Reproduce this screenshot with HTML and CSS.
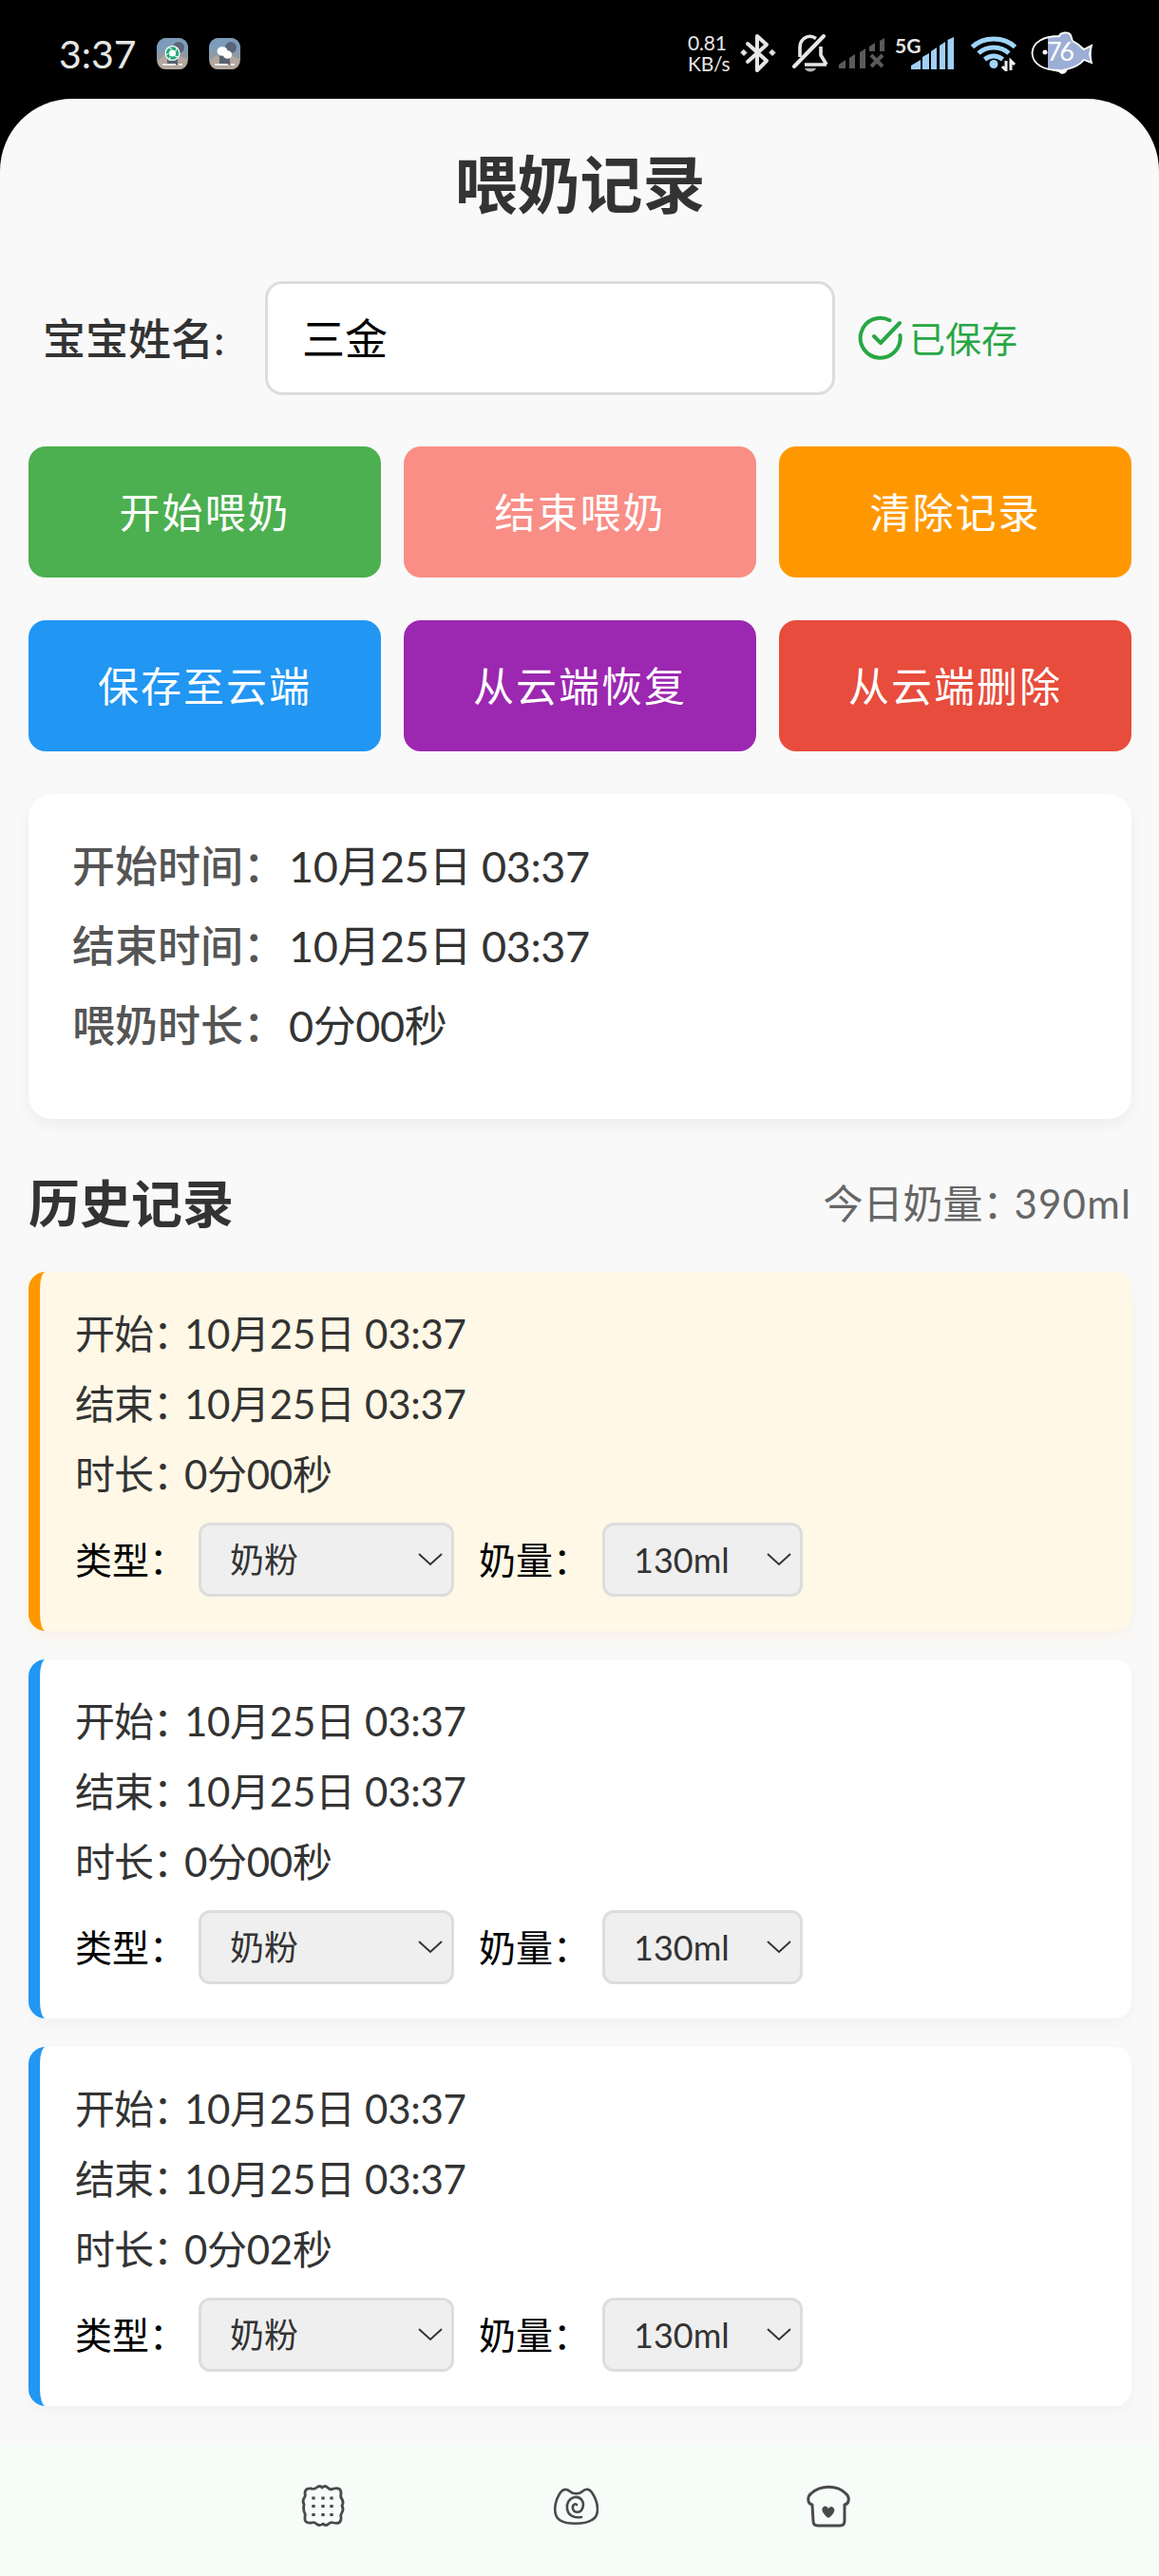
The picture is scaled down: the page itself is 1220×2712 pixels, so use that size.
FILE: index.html
```
<!DOCTYPE html>
<html lang="zh-CN">
<head>
  <meta charset="UTF-8" />
  <meta name="viewport" content="width=device-width, initial-scale=1.0" />
  <title>喂奶记录</title>
  <link rel="stylesheet" href="styles.css">
</head>
<body>
  <header class="status-bar">
    <span class="clock">3:37</span>
    <svg class="app-icon" viewBox="0 0 33 33">
      <rect width="33" height="33" rx="10" fill="#8d9aa6" />
      <path d="M0 14h33v-4a10 10 0 0 0-10-10h-13a10 10 0 0 0-10 10z" fill="#7d9cba" />
      <path d="M1 24l7-6 6 5 5-6 13 5v3a8 8 0 0 1-8 8H9a8 8 0 0 1-8-8z" fill="#b3a79f" />
      <circle cx="23" cy="10" r="6" fill="#5c6577" />
      <path d="M11 17h11v11H11z" fill="#59616f" />
      <path d="M6 28h14M23 28h4" stroke="#e9e9e9" stroke-width="2" />
      <circle cx="16.500" cy="16" r="8" fill="#fff" />
      <circle cx="16.500" cy="16" r="5.200" fill="none" stroke="#23a87a" stroke-width="3.200" />
      <path d="M16 12l-4-2M20 14l1-4M19 19l4 1M14 20l-1 4M12.500 16l-3 2" stroke="#fff" stroke-width="1" />
    </svg>
    <svg class="app-icon" viewBox="0 0 33 33">
      <rect width="33" height="33" rx="10" fill="#8d9aa6" />
      <path d="M0 14h33v-4a10 10 0 0 0-10-10h-13a10 10 0 0 0-10 10z" fill="#7d9cba" />
      <path d="M1 24l7-6 6 5 5-6 13 5v3a8 8 0 0 1-8 8H9a8 8 0 0 1-8-8z" fill="#b3a79f" />
      <circle cx="23" cy="10" r="6" fill="#5c6577" />
      <path d="M11 17h11v11H11z" fill="#59616f" />
      <path d="M6 28h14M23 28h4" stroke="#e9e9e9" stroke-width="2" />
      <ellipse cx="14" cy="14" rx="5.500" ry="4.800" fill="#fff" />
      <ellipse cx="19.500" cy="17.500" rx="4.700" ry="4.300" fill="#fff" />
    </svg>

    <div class="status-right">
      <div class="net-speed"><span>0.81</span><span>KB/s</span></div>
      <svg class="bluetooth" viewBox="0 0 38 42" fill="none" stroke="#e6e6e6" stroke-width="4" stroke-linejoin="round" stroke-linecap="round">
        <path d="M8 11l20 18-10 10V3l10 9L8 30" />
        <path d="M4 17.500l3 3-3 3-3-3zM34 17.500l3 3-3 3-3-3z" fill="#e6e6e6" stroke-width="1" />
      </svg>
      <svg class="mute" viewBox="0 0 38 42" fill="none" stroke="#e6e6e6" stroke-width="3.600">
        <path d="M25 5.500C17 0 8 6 8 15v10M13 33h23M30 14v9l6 10" />
        <path d="M2 35L33 3" stroke-width="4" stroke-linecap="round" />
        <path d="M13 37h12c-2 4.500-10 4.500-12 0z" fill="#b5b5b5" stroke="none" />
      </svg>
      <svg class="signal-off" viewBox="0 0 48 32" fill="#5a5a5a">
        <path d="M0 28l7-5v9H0zM11 21l6-4v15h-6zM22 15l6-4v21h-6zM32 9l6-4v9h-6zM43 3l5-3v14h-5z" />
        <path d="M34 18l12 12M46 18L34 30" stroke="#5a5a5a" stroke-width="4" />
      </svg>
      <div class="mobile-net">
        <span>5G</span>
        <svg viewBox="0 0 46 34">
          <path d="M0 30l10-6v10H0zM12 21l7-4v17h-7zM21 15l6-4v23h-6zM30 9l6-4v29h-6zM38.500 3L45 0v34h-6.500z" fill="#9fd0f8" />
        </svg>
      </div>
      <svg class="wifi" viewBox="0 0 48 38" fill="none" stroke="#9fd5fa" stroke-width="5">
        <path d="M1.500 12.500C13 1 35 1 46.500 12.500M8 19c9-8 23-8 32 0M14.500 25.500c6-4.500 13-4.500 19 0" />
        <circle cx="24" cy="30.500" r="4.500" fill="#9fd5fa" stroke="none" />
        <path d="M37 27v10l-4-4M42 37V27l4 4" stroke="#f2f2f2" stroke-width="3" />
      </svg>
      <div class="battery">
        <svg viewBox="0 0 66 46">
          <path d="M18 6l12-1c1-4 10-5 12-1l2 6c4 2 9 6 12 9l8-4v18l-8-3c-5 6-16 11-26 11l-12-2z" fill="#9daed6" />
          <path d="M18 39q9 3 20 0l-2 3c-2 3-5 3-6 1-5-1-9-2-12-4z" fill="#fff" />
          <path d="M1.500 23C2 11 14 5 30 5c1-4 10-5 12-1 1 2 1 4 2 6 4 2 9 6 12 9l8-4-2 9 2 9-8-3c-4 5-10 8-18 10-2 5-6 5-8 1C14 41 2 35 1.500 23z" fill="none" stroke="#fff" stroke-width="1.800" />
          <circle cx="15" cy="22" r="2.500" fill="#fff" />
        </svg>
        <span>76</span>
      </div>
    </div>
  </header>

  <main class="container">
    <h1>喂奶记录</h1>

    <div class="name-row">
      <label for="baby-name">宝宝姓名:</label>
      <input type="text" id="baby-name" value="三金" />
      <div class="save-status">
        <svg viewBox="0 0 48 48" fill="none" stroke="#28a745" stroke-width="4" stroke-linecap="round" stroke-linejoin="round">
          <path d="M33.500 5.200A21 21 0 1 0 44.500 21" />
          <path d="M17 22l7 7L44 8" />
        </svg>
        <span>已保存</span>
      </div>
    </div>

    <div class="buttons">
      <button class="btn-start">开始喂奶</button>
      <button class="btn-end" disabled>结束喂奶</button>
      <button class="btn-clear">清除记录</button>
      <button class="btn-save">保存至云端</button>
      <button class="btn-restore">从云端恢复</button>
      <button class="btn-delete">从云端删除</button>
    </div>

    <section class="current">
      <p><span class="label">开始时间：</span><span>10月25日 03:37</span></p>
      <p><span class="label">结束时间：</span><span>10月25日 03:37</span></p>
      <p><span class="label">喂奶时长：</span><span>0分00秒</span></p>
    </section>

    <div class="history-header">
      <h2>历史记录</h2>
      <div class="total"><span class="total-label">今日奶量：</span><span>390ml</span></div>
    </div>

    <div id="history"></div>
  </main>

  <nav class="nav-bar">
    <svg viewBox="0 0 48 48" fill="none" stroke="#4a4a4a" stroke-width="2.800" stroke-linejoin="round">
      <path d="M5 11q0-6 7-5 3 1 5-1 4-3 6 0 3-3 6 0 3 3 6 1 8-2 8 5-1 4 1 6 2 4 0 7 2 4 0 7-2 3-1 6 0 7-8 5-3-1-5 1-3 3-6 0-4 3-7 0-2-2-5-1-8 1-7-6 1-3-1-6-1-4 0-7-2-4 0-7 2-2 1-5z" />
      <path d="M14 14.500v3M24 14.500v3M33 14.500v3M14 23v3M24 23v3M33 23v3M14 32v3M24 32v3M33 32v3" stroke-width="3.400" />
    </svg>
    <svg viewBox="0 0 48 48" fill="none" stroke="#4a4a4a" stroke-width="2.600" stroke-linecap="round" stroke-linejoin="round">
      <path d="M18 9c3 3 10 3 13 0 4-4 8-2 10 1 8 12 8 25 0 29-8 5-27 5-34 0C0 34 1 20 8 10c3-4 7-4 10-1z" />
      <path d="M25 23c-1-2-5 0-4 4 1 5 8 5 10 0 3-7-2-13-8-12-6 1-9 7-8 12 1 8 8 10 15 9" />
    </svg>
    <svg viewBox="0 0 48 48" fill="none" stroke="#4a4a4a" stroke-width="3" stroke-linejoin="round">
      <path d="M7 23C1 21 2 14 6 11c10-9 27-9 36 0 5 4 4 11-1 12v17q0 5-5 5H13q-5 0-5-5z" />
      <path d="M24 37c-7-5-8-10-5-12 2-1 4 0 5 2 1-2 4-3 5-1 3 2 1 7-5 11z" fill="#4a4a4a" stroke="none" />
    </svg>
  </nav>

  <script>
    const records = [
      { start: '10月25日 03:37', end: '10月25日 03:37', duration: '0分00秒', latest: true },
      { start: '10月25日 03:37', end: '10月25日 03:37', duration: '0分00秒' },
      { start: '10月25日 03:37', end: '10月25日 03:37', duration: '0分02秒' }
    ];

    const arrow = '<svg class="arrow" viewBox="0 0 26 14"><path d="M1 1l12 11L25 1" /></svg>';

    document.getElementById('history').innerHTML = records.map(r => `
      <div class="record ${r.latest ? 'latest' : ''}">
        <p><span class="label">开始：</span><span>${r.start}</span></p>
        <p><span class="label">结束：</span><span>${r.end}</span></p>
        <p><span class="label">时长：</span><span>${r.duration}</span></p>
        <div class="options">
          <span class="option-label">类型：</span>
          <div class="select type">奶粉${arrow}</div>
          <span class="option-label">奶量：</span>
          <div class="select amount">130ml${arrow}</div>
        </div>
      </div>`).join('');
  </script>
</body>
</html>
```
FILE: styles.css
```
* {
  box-sizing: border-box;
}

body {
  margin: 0;
  height: 2712px;
  display: flex;
  flex-direction: column;
  overflow: hidden;
  font-family: Lato, "Noto Sans CJK SC", sans-serif;
  background-color: #000;
  color: #333;
}

h1, h2, p {
  margin: 0;
}

svg {
  display: block;
  flex-shrink: 0;
}

/* status bar */
.status-bar {
  height: 104px;
  padding: 8px 69px 0 62px;
  display: flex;
  align-items: center;
  color: #e6e6e6;
}

.clock {
  width: 103px;
  font-size: 41px;
}

.app-icon {
  width: 33px;
  height: 33px;
  margin-right: 22px;
}

.status-right {
  margin-left: auto;
  display: flex;
  align-items: center;
}

.net-speed {
  width: 55px;
  display: flex;
  flex-direction: column;
  font-size: 21px;
  line-height: 22px;
  letter-spacing: -0.2px;
}

.bluetooth {
  width: 38px;
  height: 42px;
}

.mute {
  width: 38px;
  height: 42px;
  margin-left: 17px;
}

.signal-off {
  width: 48px;
  height: 32px;
  margin-left: 11px;
}

.mobile-net {
  display: flex;
  margin-left: 11px;
}

.mobile-net span {
  width: 17px;
  font-size: 21px;
  font-weight: bold;
  line-height: 18px;
  white-space: nowrap;
}

.mobile-net svg {
  width: 46px;
  height: 34px;
}

.wifi {
  width: 48px;
  height: 38px;
  margin-left: 17px;
}

.battery {
  position: relative;
  margin-left: 15px;
}

.battery svg {
  width: 66px;
  height: 46px;
}

.battery span {
  position: absolute;
  left: 17px;
  top: 6px;
  font-size: 27px;
  line-height: 30px;
  letter-spacing: -2.5px;
  color: #fff;
}

/* page */
.container {
  flex: 1;
  padding: 48px 29px 0 30px;
  border-radius: 76px 76px 0 0;
  background-color: #f9f9f9;
}

h1 {
  font-size: 66px;
  line-height: 84px;
  text-align: center;
}

.name-row {
  display: flex;
  align-items: center;
  margin-top: 60px;
  padding-left: 15px;
}

.name-row label {
  width: 234px;
  padding-bottom: 4px;
  font-size: 45px;
  font-weight: 500;
}

.name-row input {
  width: 600px;
  height: 120px;
  padding: 0 36px 3px;
  border: 3px solid #ddd;
  border-radius: 18px;
  background-color: #fff;
  font-family: inherit;
  font-size: 45px;
  color: #000;
}

.save-status {
  display: flex;
  align-items: center;
  margin-left: 24px;
  font-size: 38px;
  color: #28a745;
}

.save-status svg {
  width: 48px;
  height: 48px;
  margin-right: 6px;
}

.save-status span {
  padding-bottom: 3px;
}

.buttons {
  display: grid;
  grid-template-columns: repeat(3, 1fr);
  gap: 45px 24px;
  margin-top: 54px;
}

.buttons button {
  height: 138px;
  padding: 0 0 4px;
  border: none;
  border-radius: 18px;
  font-family: inherit;
  font-size: 43px;
  letter-spacing: 2px;
  color: #fff;
}

.buttons .btn-start {
  background-color: #4caf50;
}

.buttons .btn-end {
  background-color: #f88e86;
}

.buttons .btn-clear {
  background-color: #ff9800;
}

.buttons .btn-save {
  background-color: #2196f3;
}

.buttons .btn-restore {
  background-color: #9c27b0;
}

.buttons .btn-delete {
  background-color: #e74c3c;
}

.current {
  height: 342px;
  margin-top: 45px;
  padding: 34px 46px;
  border-radius: 24px;
  background-color: #fff;
  box-shadow: 0 6px 15px rgba(0, 0, 0, 0.05);
  font-size: 45px;
  line-height: 84px;
  letter-spacing: -0.4px;
}

.current p {
  display: flex;
}

.current .label {
  width: 228px;
  flex-shrink: 0;
  font-weight: 500;
  letter-spacing: 0;
  color: #555;
}

.history-header {
  display: flex;
  justify-content: space-between;
  align-items: center;
  height: 80px;
  margin: 46px 0 35px;
}

h2 {
  font-size: 54px;
}

.total {
  display: flex;
  align-items: baseline;
  font-size: 42px;
  letter-spacing: 1.2px;
  color: #666;
}

.total-label {
  width: 201px;
  letter-spacing: 0;
  white-space: nowrap;
}

.record {
  height: 378px;
  margin-bottom: 30px;
  padding: 28px 37px;
  border-left: 12px solid #2196f3;
  border-radius: 18px;
  background-color: #fff;
  box-shadow: 0 6px 15px rgba(0, 0, 0, 0.03);
  font-size: 42px;
  line-height: 74px;
  letter-spacing: -0.3px;
}

.record.latest {
  border-left-color: #ff9800;
  background-color: #fff8e6;
  box-shadow: 0 6px 15px rgba(255, 152, 0, 0.08);
}

.record p {
  display: flex;
}

.record .label {
  width: 115px;
  flex-shrink: 0;
  letter-spacing: -1px;
  white-space: nowrap;
}

.options {
  display: flex;
  align-items: center;
  height: 78px;
  margin-top: 14px;
  letter-spacing: 0;
}

.option-label {
  width: 130px;
  font-size: 39px;
  color: #000;
}

.select {
  display: flex;
  justify-content: space-between;
  align-items: center;
  height: 78px;
  padding: 0 9px 0 30px;
  border: 3px solid #ddd;
  border-radius: 12px;
  background-color: #efefef;
  font-size: 36px;
}

.type {
  width: 269px;
  margin-right: 26px;
}

.amount {
  width: 211px;
}

.arrow {
  width: 26px;
  height: 14px;
  fill: none;
  stroke: #333;
  stroke-width: 2;
}

/* system navigation */
.nav-bar {
  display: flex;
  justify-content: center;
  gap: 218px;
  height: 140px;
  padding: 42px 8px 0 0;
  background-color: #f6fcf8;
}

.nav-bar svg {
  width: 48px;
  height: 48px;
}
```
